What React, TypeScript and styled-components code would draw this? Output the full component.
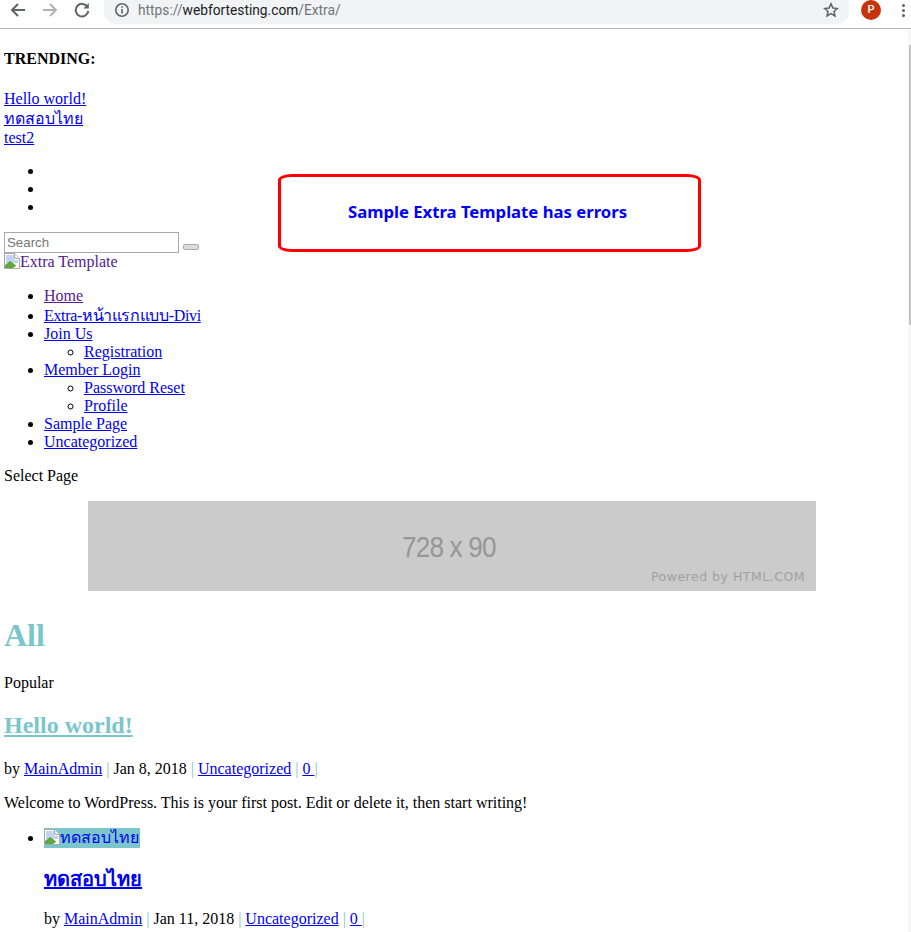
import React from "react";
import styled, { createGlobalStyle } from "styled-components";

const Global = createGlobalStyle`
  html, body { margin: 0; padding: 0; background: #fff; height: 932px; overflow: hidden; }
  body { font-family: "Liberation Serif", "Noto Sans CJK SC", serif; font-size: 16px; line-height: 18px; color: #000; }
  a { color: #0000ee; text-decoration: underline; }
`;

const Frame = styled.div`
  position: relative;
  width: 911px;
  height: 932px;
  overflow: hidden;
`;
const Toolbar = styled.header`
  height: 28px;
  border-bottom: 1px solid #b4b4b4;
  display: flex;
  align-items: flex-start;
  box-sizing: content-box;
  font-family: "Roboto", "Liberation Sans", sans-serif;
`;
const NavIcon = styled.svg`
  width: 16px;
  height: 16px;
  margin-left: ${(p: { $ml: number }) => p.$ml}px;
  margin-top: 2px;
  flex: none;
`;
const Omnibox = styled.div`
  margin-left: 14px;
  width: 745px;
  height: 24px;
  background: #f1f3f4;
  border-radius: 0 0 12px 12px;
  display: flex;
  align-items: center;
  padding: 0 10px 4px 10px;
  box-sizing: border-box;
  font-size: 13.75px;
  color: #70757a;
`;
const Url = styled.span`
  flex: 1;
  margin-left: 8px;
  & b { font-weight: 400; color: #202124; }
`;
const Avatar = styled.div`
  width: 20px;
  height: 20px;
  margin-left: 12px;
  border-radius: 50%;
  background: #c5340f;
  color: #fff;
  font-size: 11px;
  font-weight: 500;
  display: flex;
  align-items: center;
  justify-content: center;
`;
const Dots = styled.div`
  margin: 4px 0 0 21px;
  width: 3px;
  display: grid;
  gap: 2px;
  & i { display: block; width: 3px; height: 3px; border-radius: 50%; background: #5f6368; }
`;
const Scrollbar = styled.div`
  position: absolute;
  top: 29px;
  right: 0;
  width: 3px;
  height: 903px;
  background: #f6f6f6;
  & i { display: block; margin: 16px 0 0 1px; width: 2px; height: 280px; background: #c4c4c4; }
`;
const Page = styled.main`
  padding: 0 0 0 4px;
`;
const Trending = styled.h4`
  margin: 21px 0 21px;
  font-size: 16px;
  line-height: 18px;
  font-weight: 700;
`;
const TrendLink = styled.a`
  display: block;
  width: fit-content;
  line-height: ${(p: { $lh?: number }) => p.$lh ?? 19}px;
`;
const Bullets = styled.ul`
  margin: 15px 0 18px;
  padding-left: 40px;
  & li { height: 18px; }
`;
const SearchRow = styled.form`
  display: flex;
  align-items: flex-end;
  height: 20px;
  margin: -1px 0 0;
`;
const SearchInput = styled.input`
  width: 175px;
  height: 21px;
  box-sizing: border-box;
  border: 1px solid #a9a9a9;
  padding: 0 2px 1px;
  font-family: "Liberation Sans", sans-serif;
  font-size: 13.3px;
  &::placeholder { color: #757575; opacity: 1; }
`;
const SearchButton = styled.button`
  width: 16px;
  height: 6px;
  margin: 0 0 3px 4px;
  padding: 0;
  border: 1px solid #a9a9a9;
  border-radius: 2px;
  background: #ddd;
`;
const BrokenSvg = styled.svg`
  width: 16px;
  height: 16px;
  flex: none;
  vertical-align: -2px;
`;
const LogoLink = styled.a`
  display: block;
  width: fit-content;
  color: #551a8b;
  text-decoration: none;
  line-height: 18px;
`;
const Menu = styled.ul`
  margin: 16px 0 0;
  padding-left: 40px;
  & > li { line-height: 18px; }
`;
const ThaiItem = styled.li`
  height: 20px;
  padding-top: 2px;
  box-sizing: border-box;
  & a { letter-spacing: -0.35px; }
`;
const SubMenu = styled.ul`
  margin: 0;
  padding-left: 40px;
  list-style: circle;
  & li { line-height: 18px; }
`;
const Visited = styled.a`
  color: #551a8b;
`;
const SelectPage = styled.div`
  margin-top: 16px;
  height: 18px;
`;
const Banner = styled.div`
  position: relative;
  width: 728px;
  height: 90px;
  margin: 16px 0 0 84px;
  background: #cbcbcb;
  color: #969696;
`;
const BannerSize = styled.span`
  position: absolute;
  left: 314px;
  top: 29px;
  font-family: "Liberation Sans", sans-serif;
  font-size: 29px;
  line-height: 34px;
  letter-spacing: -0.9px;
  transform: scaleX(0.9);
  transform-origin: left;
  white-space: nowrap;
`;
const BannerCredit = styled.span`
  position: absolute;
  right: 11px;
  bottom: 7px;
  font-family: "DejaVu Sans", sans-serif;
  font-size: 12.5px;
  line-height: 14px;
  letter-spacing: 0.5px;
  color: #a0a0a0;
`;
const CategoryTitle = styled.h1`
  margin: 26px 0 0;
  font-size: 32px;
  line-height: 37px;
  font-weight: 700;
  color: #7ac6cc;
`;
const Plain = styled.p`
  margin: 20px 0 0;
  line-height: 18px;
`;
const PostTitle = styled.h2`
  margin: 20px 0 0;
  font-size: 24px;
  line-height: 27px;
  font-weight: 700;
  & a { color: #7ac6cc; }
`;
const Meta = styled.p`
  margin: ${(p: { $mt: number }) => p.$mt}px 0 0;
  line-height: 18px;
  color: #7ac6cc;
  & span { color: #000; }
`;
const Excerpt = styled.p`
  margin: 16px 0 0;
  line-height: 18px;
`;
const Posts = styled.ul`
  margin: 16px 0 0;
  padding-left: 40px;
`;
const Thumb = styled.a`
  display: inline-block;
  height: 20px;
  line-height: 20px;
  background: #7ac6cc;
  color: #0000ee;
  text-decoration: none;
  padding-right: 1px;
`;
const ItemTitle = styled.h3`
  margin: 19px 0 0;
  font-size: 20px;
  line-height: 24px;
  font-weight: 700;
`;
const ErrorBox = styled.div`
  position: absolute;
  left: 278px;
  top: 174px;
  width: 423px;
  height: 78px;
  box-sizing: border-box;
  border: 3px solid #ff0000;
  border-radius: 14px / 6px;
  padding: 0 4px 2px 0;
  display: flex;
  align-items: center;
  justify-content: center;
  color: #0000ff;
  font-family: "Noto Sans", Verdana, sans-serif;
  font-size: 16.7px;
  font-weight: 700;
  background: #fff;
`;

const Broken = () => (
  <BrokenSvg viewBox="0 0 16 16">
    <path d="M.5.5h10l5 5v10H.5z" fill="#fff" stroke="#a8a8a8" />
    <path d="M10.5.5v5h5" fill="#eee" stroke="#a8a8a8" />
    <path d="M2 2h8v5l4 0v3H2z" fill="#c3d4f2" />
    <path d="M1 15v-3l5-4 3 2 6 5z" fill="#5fa83f" />
    <path d="M9 15l6-4v4z" fill="#fff" />
  </BrokenSvg>
);

export default function App() {
  return (
    <Frame>
      <Global />
      <Toolbar>
        <NavIcon $ml={10} viewBox="0 0 16 16" fill="none" stroke="#5f6368" strokeWidth="2">
          <path d="M15 8H2M8 2 2 8l6 6" />
        </NavIcon>
        <NavIcon $ml={16} viewBox="0 0 16 16" fill="none" stroke="#b0b3b6" strokeWidth="2">
          <path d="M1 8h13M8 2l6 6-6 6" />
        </NavIcon>
        <NavIcon $ml={16} viewBox="0 0 16 16" fill="none" stroke="#5f6368" strokeWidth="2">
          <path d="M13.5 5A6.3 6.3 0 1 0 14.3 9" />
          <path d="M14.8 1v5.4H9.4z" fill="#5f6368" stroke="none" />
        </NavIcon>
        <Omnibox>
          <svg width="16" height="16" viewBox="0 0 16 16" fill="none" stroke="#5f6368" strokeWidth="1.6">
            <circle cx="8" cy="8" r="6.2" />
            <path d="M8 7v4.4M8 4.2v1.6" />
          </svg>
          <Url>
            https://<b>webfortesting.com</b>/Extra/
          </Url>
          <svg width="16" height="16" viewBox="0 0 16 16" fill="none" stroke="#5f6368" strokeWidth="1.5">
            <path d="M8 1.8l1.9 4.2 4.5.5-3.4 3 1 4.5L8 11.6 4 14l1-4.5-3.4-3 4.5-.5z" />
          </svg>
        </Omnibox>
        <Avatar>P</Avatar>
        <Dots>
          <i />
          <i />
          <i />
        </Dots>
      </Toolbar>
      <Page>
        <Trending>TRENDING:</Trending>
        <TrendLink href="#">Hello world!</TrendLink>
        <TrendLink href="#" $lh={21}>ทดสอบไทย</TrendLink>
        <TrendLink href="#" $lh={18}>test2</TrendLink>
        <Bullets>
          <li />
          <li />
          <li />
        </Bullets>
        <SearchRow>
          <SearchInput placeholder="Search" />
          <SearchButton type="button" />
        </SearchRow>
        <LogoLink href="#">
          <Broken />
          Extra Template
        </LogoLink>
        <Menu>
          <li><Visited href="#">Home</Visited></li>
          <ThaiItem><a href="#">Extra-หน้าแรกแบบ-Divi</a></ThaiItem>
          <li>
            <a href="#">Join Us</a>
            <SubMenu><li><a href="#">Registration</a></li></SubMenu>
          </li>
          <li>
            <a href="#">Member Login</a>
            <SubMenu>
              <li><a href="#">Password Reset</a></li>
              <li><a href="#">Profile</a></li>
            </SubMenu>
          </li>
          <li><a href="#">Sample Page</a></li>
          <li><a href="#">Uncategorized</a></li>
        </Menu>
        <SelectPage>Select Page</SelectPage>
        <Banner>
          <BannerSize>728 x 90</BannerSize>
          <BannerCredit>Powered by HTML.COM</BannerCredit>
        </Banner>
        <CategoryTitle>All</CategoryTitle>
        <Plain>Popular</Plain>
        <PostTitle><a href="#">Hello world!</a></PostTitle>
        <Meta $mt={21}>
          <span>by </span><a href="#">MainAdmin</a> | <span>Jan 8, 2018</span> | <a href="#">Uncategorized</a> | <a href="#">0 </a>|
        </Meta>
        <Excerpt>Welcome to WordPress. This is your first post. Edit or delete it, then start writing!</Excerpt>
        <Posts>
          <li>
            <Thumb href="#"><Broken />ทดสอบไทย</Thumb>
            <ItemTitle><a href="#">ทดสอบไทย</a></ItemTitle>
            <Meta $mt={19}>
              <span>by </span><a href="#">MainAdmin</a> | <span>Jan 11, 2018</span> | <a href="#">Uncategorized</a> | <a href="#">0 </a>|
            </Meta>
          </li>
        </Posts>
      </Page>
      <Scrollbar><i /></Scrollbar>
      <ErrorBox>Sample Extra Template has errors</ErrorBox>
    </Frame>
  );
}
